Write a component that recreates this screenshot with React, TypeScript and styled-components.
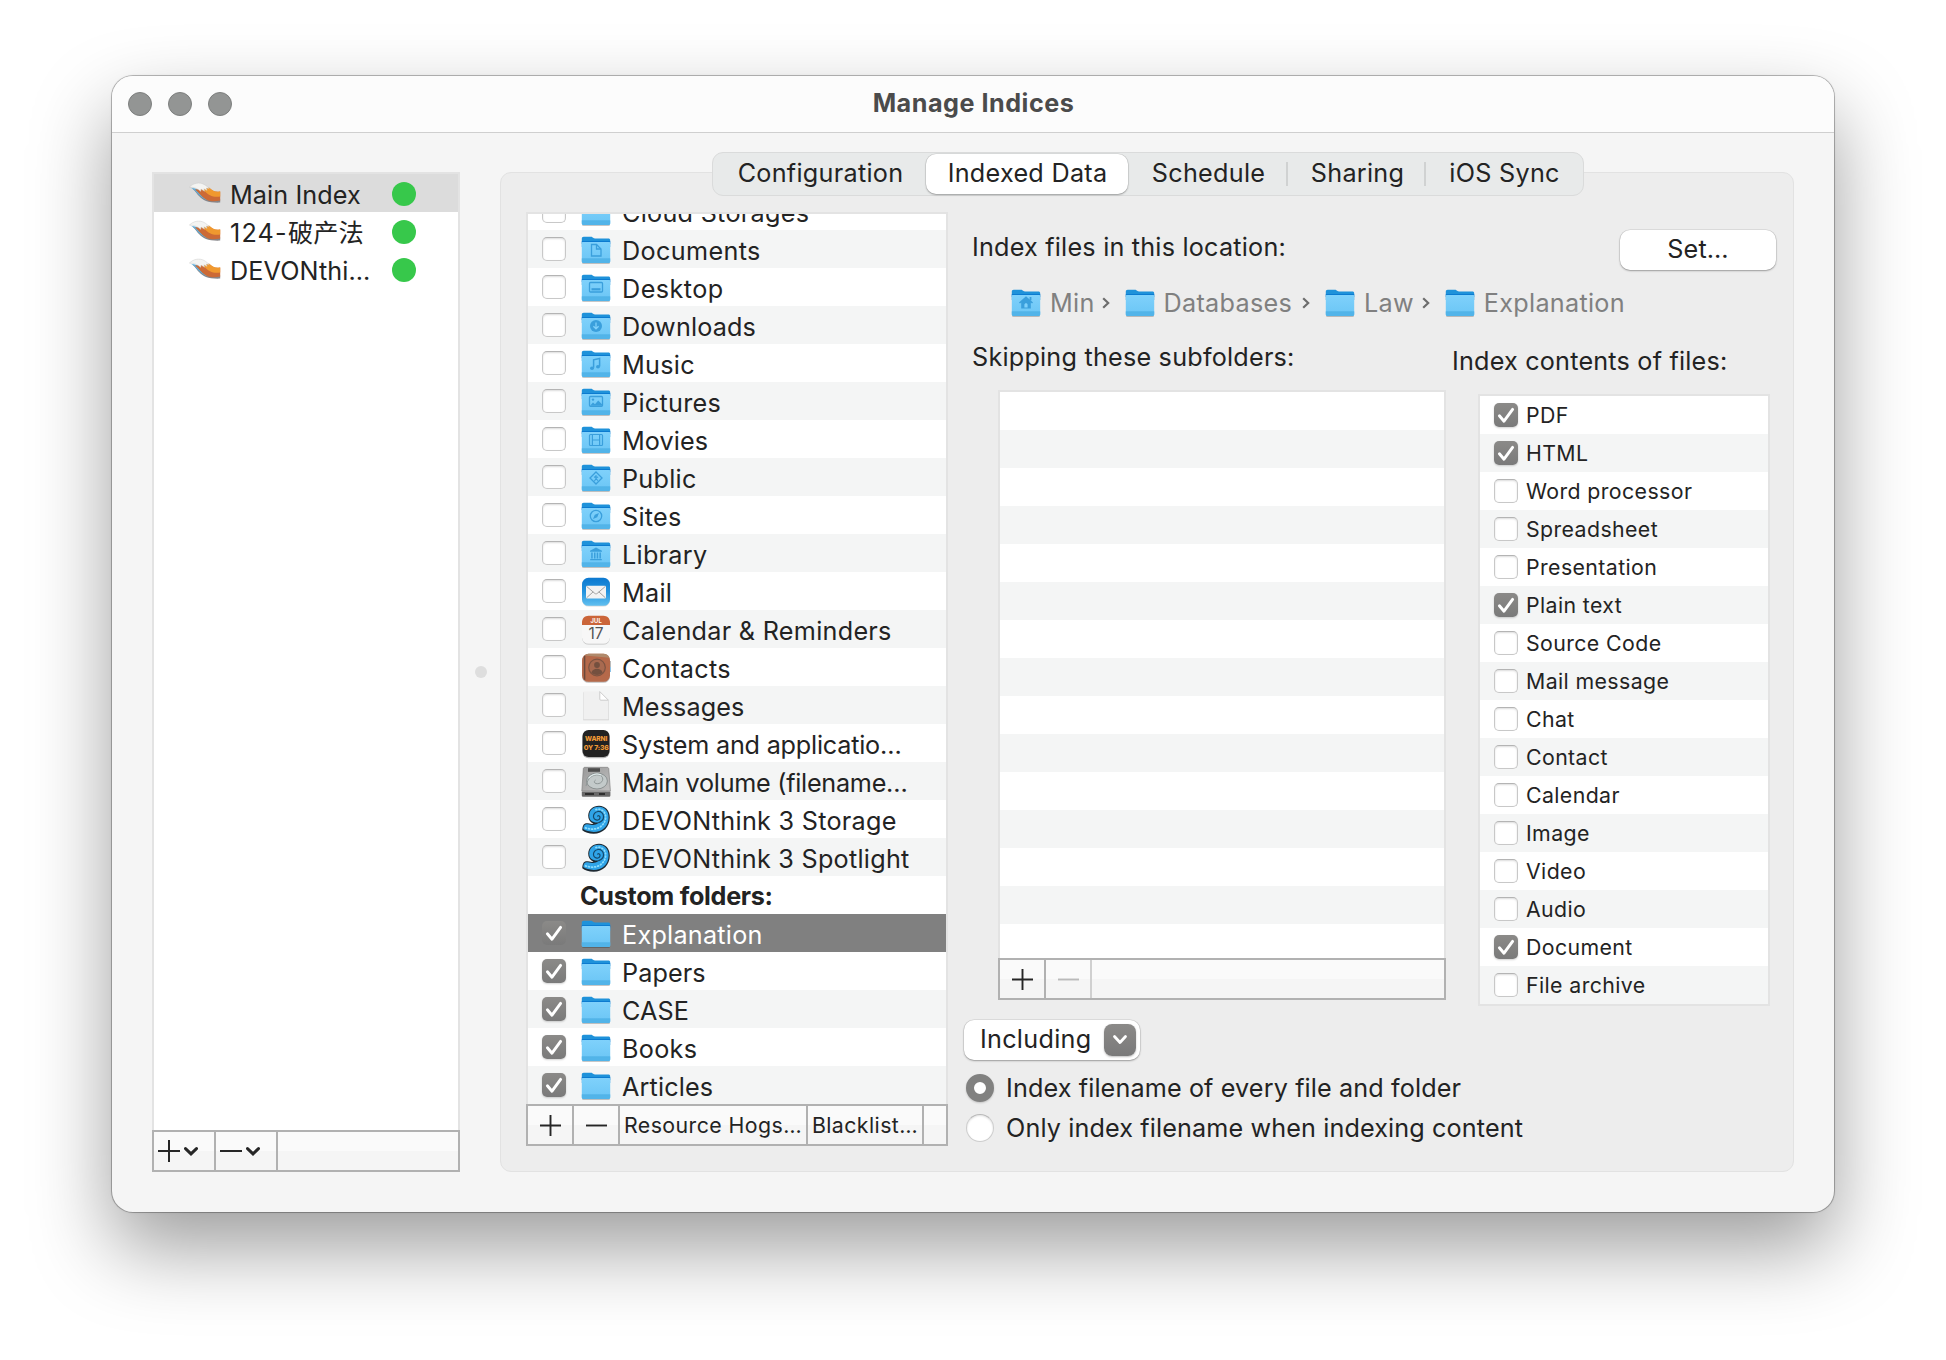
import React from "react";
import styled, { createGlobalStyle, css } from "styled-components";

const GlobalStyle = createGlobalStyle`
  * { box-sizing: border-box; }
  body {
    margin: 0;
    background: #fff;
    color: #232323;
    font-family: "Inter", "Noto Sans CJK SC", sans-serif;
    font-size: 25.2px;
    line-height: 34px;
    letter-spacing: 0.28px;
    -webkit-font-smoothing: antialiased;
  }
`;

/* ---------- window ---------- */

const Desktop = styled.div`
  width: 1946px;
  height: 1360px;
  padding: 76px 112px 148px;
  overflow: hidden;
`;

const Window = styled.main`
  display: flex;
  flex-direction: column;
  height: 1136px;
  border-radius: 21px;
  background: #f5f5f5;
  box-shadow: 0 0 0 1px rgba(0, 0, 0, 0.24), 0 0 3px rgba(0, 0, 0, 0.12), 0 36px 80px rgba(0, 0, 0, 0.39);
`;

const TitleBar = styled.header`
  display: grid;
  flex: none;
  grid-template-columns: 200px 1fr 200px;
  align-items: center;
  height: 57px;
  padding: 0 16px;
  border-bottom: 1px solid #cfcfcf;
  border-radius: 21px 21px 0 0;
  background: #fcfcfc;
`;

const Lights = styled.div`
  display: flex;
  gap: 16px;
`;

const Light = styled.span`
  width: 24px;
  height: 24px;
  border: 1px solid #7d7f7e;
  border-radius: 50%;
  background: #939594;
`;

const Title = styled.h1`
  margin: 0;
  padding: 0 0 3px 1px;
  color: #4b4b4b;
  font-size: inherit;
  font-weight: 700;
  letter-spacing: 0.5px;
  text-align: center;
`;

const Body = styled.div`
  display: flex;
  flex: 1;
  min-height: 0;
  padding: 19px 40px 40px;
`;

/* ---------- shared list pieces ---------- */

const ListFrame = styled.div`
  flex: 1;
  min-height: 0;
  overflow: hidden;
  border: 2px solid #e3e3e3;
  border-bottom-width: 0;
  background: #fff;
`;

const Footer = styled.div`
  display: flex;
  flex: none;
  height: 42px;
  border: 2px solid #b1b1b1;
  background: linear-gradient(#fafafa 0 50%, #f5f5f5 50% 100%);
`;

const FooterCell = styled.div<{ $w: number; $dim?: boolean }>`
  display: flex;
  align-items: center;
  justify-content: center;
  width: ${(p) => p.$w + 2}px;
  border-right: 2px solid ${(p) => (p.$dim ? "#d0d0d0" : "#b1b1b1")};
  font-size: 21.3px;
  letter-spacing: 0.44px;
  white-space: nowrap;
`;

const RowText = styled.span<{ $ls?: number }>`
  padding-top: 3px;
  white-space: nowrap;
  ${(p) => p.$ls !== undefined && css`letter-spacing: ${p.$ls}px;`}
`;

const IconSlot = styled.span`
  display: flex;
  width: 30px;
  height: 30px;
  margin-top: 2px;
  svg { display: block; overflow: visible; }
`;

const CheckBox = styled.span<{ $on?: boolean; $flat?: boolean }>`
  display: flex;
  align-items: center;
  justify-content: center;
  flex: none;
  width: 24px;
  height: 24px;
  border-radius: 5px;
  ${(p) =>
    p.$on
      ? css`
          background: linear-gradient(#8b8a88, #7a7a7a);
          box-shadow: ${p.$flat ? "none" : "0 1px 2px rgba(0, 0, 0, 0.18)"};
        `
      : css`
          border: 1px solid #c8c8c8;
          border-top-color: #b4b4b4;
          background: #fff;
          box-shadow: inset 0 1px 2px rgba(0, 0, 0, 0.14);
        `}
`;

/* ---------- sidebar ---------- */

const Sidebar = styled.aside`
  display: flex;
  flex-direction: column;
  width: 308px;
  margin-top: 20px;
`;

const IndexRow = styled.div<{ $active?: boolean }>`
  display: flex;
  align-items: center;
  height: 38px;
  padding-left: 35px;
  background: ${(p) => (p.$active ? "#dcdcdc" : "#fff")};
`;

const IndexName = styled(RowText)`
  width: 164px;
  padding-left: 9px;
  letter-spacing: 0.1px;
`;

const Digits = styled.span`
  letter-spacing: 1.2px;
`;

const StatusDot = styled.span`
  width: 24px;
  height: 24px;
  margin: 2px 0 0 7px;
  border-radius: 50%;
  background: #37c84b;
`;

const Splitter = styled.div`
  display: flex;
  align-items: center;
  justify-content: center;
  width: 40px;
  margin-top: 20px;
`;

const Grip = styled.span`
  width: 12px;
  height: 12px;
  margin-left: 2px;
  border-radius: 50%;
  background: #dedede;
`;

/* ---------- tabs and panel ---------- */

const Content = styled.section`
  display: flex;
  flex-direction: column;
  flex: 1;
`;

const Tabs = styled.nav`
  position: relative;
  z-index: 1;
  display: flex;
  flex: none;
  align-self: center;
  height: 44px;
  margin-left: 2px;
  padding: 1px;
  border: 1px solid #dadbdb;
  border-radius: 11px;
  background: #e8eaea;
`;

const Tab = styled.div<{ $w: number; $active?: boolean; $divider?: boolean }>`
  display: flex;
  align-items: center;
  justify-content: center;
  width: ${(p) => p.$w}px;
  padding: 0 0 3px 1px;
  border-radius: ${(p) => (p.$active ? "10px" : "0")};
  ${(p) =>
    p.$active &&
    css`
      background: #fff;
      box-shadow: 0 0 0 0.5px rgba(0, 0, 0, 0.12), 0 1px 2px rgba(0, 0, 0, 0.28);
    `}
  ${(p) =>
    p.$divider &&
    css`
      background: linear-gradient(#d0d2d2, #d0d2d2) right center / 2px 24px no-repeat;
    `}
`;

const Panel = styled.div`
  display: flex;
  flex: 1;
  min-height: 0;
  margin-top: -24px;
  padding: 39px 23px 25px 25px;
  border: 1px solid #e2e2e2;
  border-radius: 11px;
  background: #ededed;
`;

const SourceColumn = styled.div`
  display: flex;
  flex-direction: column;
  width: 422px;
`;

const SourceRow = styled.div<{ $tint?: boolean; $selected?: boolean }>`
  display: flex;
  align-items: center;
  height: 38px;
  padding-left: 14px;
  background: ${(p) => (p.$selected ? "#808080" : p.$tint ? "#f4f5f5" : "#fff")};
  color: ${(p) => (p.$selected ? "#fff" : "inherit")};
  &:first-child { margin-top: -22px; }
  ${IconSlot} { margin-left: 15px; margin-right: 11px; }
`;

const GroupHeading = styled.div`
  height: 38px;
  padding: 3px 0 0 52px;
  font-weight: 700;
  letter-spacing: -0.3px;
`;

const Details = styled.div`
  display: flex;
  flex-direction: column;
  flex: 1;
  padding: 18px 0 0 16px;
`;

const LocationRow = styled.div`
  display: flex;
  flex: none;
  justify-content: space-between;
  height: 40px;
  padding-left: 8px;
  letter-spacing: 0.21px;
`;

const buttonFace = css`
  flex: none;
  height: 40px;
  border-radius: 10px;
  background: #fff;
  box-shadow: 0 0 0 0.5px rgba(0, 0, 0, 0.13), 0 1px 2px rgba(0, 0, 0, 0.3);
`;

const PushButton = styled.div`
  ${buttonFace}
  display: flex;
  align-items: center;
  justify-content: center;
  width: 156px;
  margin-right: -6px;
  padding-bottom: 3px;
`;

const Crumbs = styled.div`
  display: flex;
  flex: none;
  align-items: center;
  height: 34px;
  margin-top: 16px;
  padding-left: 47px;
  color: #808080;
`;

const Crumb = styled.span`
  display: flex;
  align-items: center;
  ${IconSlot} { margin: 0 9px 0 0; }
`;

const CrumbArrow = styled.svg<{ $lead: number }>`
  display: block;
  margin: 0 14px 0 ${(p) => p.$lead}px;
`;

const Columns = styled.div`
  display: flex;
  flex: none;
  align-items: flex-start;
  height: 686px;
`;

const SkipColumn = styled.div`
  display: flex;
  flex-direction: column;
  width: 482px;
  height: 680px;
  padding-top: 20px;
  letter-spacing: 0.22px;
`;

const SkipBox = styled.div`
  display: flex;
  flex-direction: column;
  flex: 1;
  min-height: 0;
  width: 448px;
  margin: 16px 0 0 34px;
`;

const EmptyRow = styled.div`
  height: 38px;
  &:nth-child(even) { background: #f4f5f5; }
`;

const Caption = styled.div<{ $inset: number }>`
  padding-left: ${(p) => p.$inset}px;
`;

const TypeColumn = styled.div`
  padding: 24px 0 0 4px;
  letter-spacing: 0.2px;
`;

const TypeList = styled.div`
  width: 292px;
  margin: 16px 0 0 28px;
  border: 2px solid #e3e3e3;
  background: #fff;
`;

const TypeRow = styled.div`
  display: flex;
  align-items: center;
  gap: 8px;
  height: 38px;
  padding-left: 14px;
  font-size: 21.3px;
  letter-spacing: 0.4px;
  &:nth-child(even) { background: #f4f5f5; }
`;

const Popup = styled.div`
  ${buttonFace}
  display: flex;
  align-items: center;
  justify-content: space-between;
  width: 176px;
  margin-top: 14px;
  padding: 0 4px 0 16px;
`;

const PopupText = styled.span`
  padding-bottom: 3px;
`;

const PopupArrow = styled.span`
  display: flex;
  align-items: center;
  justify-content: center;
  width: 32px;
  height: 32px;
  border-radius: 8px;
  background: linear-gradient(#8b8a88, #7a7a7a);
  box-shadow: 0 1px 2px rgba(0, 0, 0, 0.25);
`;

const Radios = styled.div`
  flex: none;
  margin-top: 8px;
  letter-spacing: 0.12px;
`;

const RadioRow = styled.div`
  display: flex;
  align-items: center;
  gap: 12px;
  height: 40px;
  padding-left: 2px;
`;

const Radio = styled.span<{ $on?: boolean }>`
  width: 28px;
  height: 28px;
  border-radius: 50%;
  ${(p) =>
    p.$on
      ? css`
          border: 8px solid #818180;
          background: #fff;
          box-shadow: 0 1px 2px rgba(0, 0, 0, 0.18);
        `
      : css`
          border: 1px solid #cdcdcd;
          border-top-color: #b8b8b8;
          background: #fff;
          box-shadow: inset 0 1px 2px rgba(0, 0, 0, 0.12);
        `}
`;

/* ---------- icons ---------- */

const Tick = () => (
  <svg width="24" height="24" viewBox="0 0 24 24" fill="none">
    <path d="M5.4 12.8 10 18.2 18.6 6.4" stroke="#fff" strokeWidth="2.9" strokeLinecap="round" strokeLinejoin="round" />
  </svg>
);

const Plus = ({ size = 21 }: { size?: number }) => (
  <svg width={size} height={size} viewBox="0 0 22 22">
    <path d="M11 0v22M0 11h22" stroke="#262626" strokeWidth="2" />
  </svg>
);

const Minus = ({ dim, size = 21 }: { dim?: boolean; size?: number }) => (
  <svg width={size} height={size} viewBox="0 0 22 22">
    <path d="M0 11h22" stroke={dim ? "#bababa" : "#262626"} strokeWidth="2" />
  </svg>
);

const MenuArrow = styled(({ className }: { className?: string }) => (
  <svg className={className} width="14" height="9" viewBox="0 0 14 9" fill="none">
    <path d="M1.5 1.6 7 6.9l5.5-5.3" stroke="#262626" strokeWidth="3" strokeLinecap="round" />
  </svg>
))`
  margin: 1px 12px 0 4px;
`;

const glyphStroke = { fill: "none", stroke: "#3a9fdc", strokeWidth: 1.3 } as const;
const glyphFill = "#3a9fdc";

const glyphs: Record<string, React.ReactNode> = {
  documents: (
    <g {...glyphStroke}>
      <path d="M10.5 9.5h5l4.5 4.5v7h-9.5z" />
      <path d="M15.5 9.5v4.5h4.5" />
    </g>
  ),
  desktop: (
    <g>
      <rect x="8.5" y="9.5" width="13" height="9.5" rx="1" {...glyphStroke} />
      <rect x="10.5" y="15.2" width="9" height="2.2" fill={glyphFill} />
    </g>
  ),
  downloads: (
    <g>
      <circle cx="15" cy="15" r="6" fill={glyphFill} />
      <path d="M15 11.6v6M12.4 15.2l2.6 2.6 2.6-2.6" fill="none" stroke="#7fd0fa" strokeWidth="1.3" />
    </g>
  ),
  music: (
    <g>
      <path d="M12.6 18.8v-8l6-1.3v8" {...glyphStroke} strokeWidth="1.5" />
      <ellipse cx="11" cy="19.2" rx="2" ry="1.7" fill={glyphFill} />
      <ellipse cx="17" cy="17.8" rx="2" ry="1.7" fill={glyphFill} />
    </g>
  ),
  pictures: (
    <g>
      <rect x="8.5" y="9.5" width="13" height="9.8" rx="1" {...glyphStroke} />
      <circle cx="12" cy="12.6" r="1.2" fill={glyphFill} />
      <path d="m9 18.8 3-3.2 2 1.6 3.2-3.8 4 4.2v1.2z" fill={glyphFill} />
    </g>
  ),
  movies: (
    <g {...glyphStroke} strokeWidth="1.2">
      <rect x="8.5" y="9.5" width="13" height="11" rx="1" />
      <path d="M11.4 9.5v11M18.6 9.5v11M11.4 15h7.2" />
    </g>
  ),
  public: (
    <g {...glyphStroke}>
      <path d="m15 9 6 6-6 6-6-6z" />
      <path d="M15 12v3.4l-1.6 2.8M15 15.2l1.8 2.6M12.9 14.2l2.1-.8 2.2 1" strokeWidth="1.1" />
    </g>
  ),
  sites: (
    <g>
      <circle cx="15" cy="15" r="5.7" {...glyphStroke} />
      <path d="m18 12-1.8 4.2L12 18l1.8-4.2z" fill={glyphFill} />
    </g>
  ),
  library: (
    <g fill={glyphFill}>
      <path d="m15 8.6 6 3.2v1H9v-1z" />
      <path d="M10.2 13.6h1.5v6h-1.5zM13 13.6h1.5v6H13zM15.7 13.6h1.5v6h-1.5zM18.4 13.6h1.5v6h-1.5zM9.2 20h11.6v1.3H9.2z" />
    </g>
  ),
  home: (
    <g fill={glyphFill}>
      <path d="m15 8.2 7 6.4-1 1-1.2-1v6h-9.6v-6l-1.2 1-1-1z" />
      <path d="M18.600 9h1.800v3.400h-1.800z" />
      <path d="M13.400 19.600v-2.800c0-.9.700-1.500 1.600-1.500s1.600.6 1.600 1.500v2.800z" fill="#7fd0fa" />
    </g>
  ),
};

const Folder = ({ glyph }: { glyph?: string }) => (
  <svg width="30" height="30" viewBox="0 0 30 30">
    <defs>
      <linearGradient id="folderFront" x1="0" y1="0" x2="0" y2="1">
        <stop offset="0" stopColor="#7fd1fb" />
        <stop offset="1" stopColor="#6ac5f5" />
      </linearGradient>
    </defs>
    <rect x="1" y="26" width="28" height="3" rx="1.5" fill="rgba(0,0,0,.22)" />
    <path d="M.8 3.6C.8 2.4 1.5 1.7 2.7 1.7h7.1c1.2 0 1.6.5 2.3 1.1.6.5 1.1.8 2 .8h13.1c1.3 0 2 .6 2 1.8V12H.8z" fill="#1f92da" />
    <path d="M.8 6h28.4v3H.8z" fill="#0c7bd0" />
    <path d="M.8 8.2c0-.9.5-1.2 1.2-1.2h26c.8 0 1.2.4 1.2 1.2v18c0 1-.5 1.7-1.6 1.7H2.4c-1 0-1.6-.6-1.6-1.7z" fill="url(#folderFront)" />
    <path d="M.8 24h28.4v2.3c0 1-.5 1.7-1.6 1.7H2.4c-1 0-1.6-.6-1.6-1.7z" fill="#52b4e9" />
    <path d="M.8 23.6h28.4" stroke="#4fb0e6" strokeWidth=".7" />
    {glyph && glyphs[glyph]}
  </svg>
);

const MailIcon = () => (
  <svg width="30" height="30" viewBox="0 0 30 30">
    <defs>
      <linearGradient id="mailBg" x1="0" y1="0" x2="0" y2="1">
        <stop offset="0" stopColor="#0c79d0" />
        <stop offset=".5" stopColor="#2493de" />
        <stop offset="1" stopColor="#62c0f0" />
      </linearGradient>
    </defs>
    <rect x="1" y="1.6" width="28" height="28" rx="6.5" fill="rgba(0,0,0,.15)" />
    <rect x="1" y=".8" width="28" height="28" rx="6.5" fill="url(#mailBg)" />
    <rect x="5" y="8.8" width="20" height="12.6" rx="1.2" fill="#f3f3f3" />
    <path d="m5.6 9.4 8.2 7c.8.6 1.600.6 2.400 0l8.200-7M5.600 20.800l6.600-6M24.400 20.800l-6.600-6" fill="none" stroke="#a2a2a2" strokeWidth="1" />
  </svg>
);

const CalendarIcon = () => (
  <svg width="30" height="30" viewBox="0 0 30 30">
    <rect x="1" y="1.6" width="28" height="28" rx="6.5" fill="rgba(0,0,0,.22)" />
    <rect x="1" y=".8" width="28" height="28" rx="6.5" fill="#f7f7f7" />
    <path d="M1 10V7.300C1 3.600 3.800.8 7.500.8h15C26.200.8 29 3.600 29 7.300V10z" fill="#cb6539" />
    <text x="15.200" y="7.800" textAnchor="middle" fontSize="5.800" fontWeight="700" fill="#fff" letterSpacing=".2">JUL</text>
    <text x="15" y="23.600" textAnchor="middle" fontSize="15.500" fill="#555" letterSpacing="0">17</text>
  </svg>
);

const ContactsIcon = () => (
  <svg width="30" height="30" viewBox="0 0 30 30">
    <rect x="1" y="1.800" width="28" height="28" rx="6.500" fill="rgba(0,0,0,.25)" />
    <path d="M26 8h3.600v6H26z" fill="#8c8c8c" />
    <path d="M26 14h3.600v5H26z" fill="#3f9bd8" />
    <rect x="1" y=".8" width="28" height="28" rx="6.500" fill="#b5694a" />
    <path d="M4 2.600C5 1.500 6.200.8 7.500.8h15c2.700 0 5 1.600 6 4z" fill="#b08a6c" />
    <path d="M3.600 2.800v24" stroke="#6b4a3c" strokeWidth="1.500" />
    <circle cx="16" cy="14.500" r="8.300" fill="#a86a50" stroke="#7d5442" strokeWidth="1.200" />
    <circle cx="16" cy="12" r="2.900" fill="#74503f" />
    <path d="M10.300 19.800c1-3 3.200-4 5.700-4s4.700 1 5.700 4c-1.600 1.500-3.500 2.200-5.700 2.200s-4.100-.7-5.700-2.200z" fill="#74503f" />
  </svg>
);

const PageIcon = () => (
  <svg width="30" height="30" viewBox="0 0 30 30">
    <path d="M2.300 1.200h16.600l8.900 8.600v19.500H2.300z" fill="#cdcdcd" />
    <path d="M2.500.6h16.300l8.600 8.600v19.400H2.500z" fill="#f0f0f0" />
    <path d="M18.800.6v7.600c0 .7.300 1 1 1h7.600z" fill="#fff" stroke="#c6c6c6" strokeWidth=".9" />
  </svg>
);

const ConsoleIcon = () => (
  <svg width="30" height="30" viewBox="0 0 30 30">
    <rect x="1.500" y="2.200" width="27" height="27" rx="6" fill="rgba(0,0,0,.3)" />
    <rect x="1.500" y="1" width="27" height="27" rx="6" fill="#222" />
    <text x="15.200" y="12" textAnchor="middle" fontSize="6.600" fontWeight="800" fill="#f19a35" letterSpacing="-.1">WARNI</text>
    <text x="15.200" y="21.200" textAnchor="middle" fontSize="6.800" fontWeight="800" fill="#f19a35" letterSpacing="-.2">0Y 7:36</text>
  </svg>
);

const DriveIcon = () => (
  <svg width="30" height="30" viewBox="0 0 30 30">
    <defs>
      <linearGradient id="driveTop" x1="0" y1="0" x2="1" y2="1">
        <stop offset="0" stopColor="#989898" />
        <stop offset="1" stopColor="#c0c0c0" />
      </linearGradient>
    </defs>
    <path d="M4 .3h22c1 0 1.600.5 1.800 1.500L29.400 24H.8L2.300 1.800C2.400.8 3 .3 4 .3z" fill="url(#driveTop)" stroke="#777" strokeWidth=".6" />
    <path d="M.8 24.400h28.600v3.800c0 1-.6 1.500-1.500 1.500H2.400c-1 0-1.600-.5-1.600-1.500z" fill="#686868" />
    <path d="M7 1.200h12v3.600H7z" fill="#4d4d4d" />
    <ellipse cx="16" cy="14" rx="10.400" ry="8" fill="#c3caca" stroke="#858b8b" strokeWidth=".9" />
    <path d="M5 19c1.500-8 7-12 13-11 5 1 5 7 0 8.500-4 1-6-1.500-3.500-3.500" fill="none" stroke="#8f9797" strokeWidth="1" />
    <path d="M8 11c3-4 8-5 12-3" fill="none" stroke="#e3eeee" strokeWidth="1.100" />
    <path d="M4 27h9M18 27h6" stroke="#2d2d2d" strokeWidth="2" />
  </svg>
);

const ShellIcon = () => (
  <svg width="30" height="30" viewBox="0 0 30 30" fill="none" strokeLinecap="round">
    <path d="M1.300 25.200c0-3.600 1.200-6.800 3.700-7 2.800-.1 4.700 1 7.500.6-3.800-1.800-5.400-4.600-5.300-8.200C7.400 4.600 12 .8 18 .8c6.400 0 10.800 5 10.800 11.800 0 9.600-6.800 16.200-16.200 16.200-4.800 0-8.600-1.400-11.300-3.600z" fill="#1e2a33" />
    <path d="M8.200 10.500C8.400 5 12.500 1.800 17.900 1.800c5.700 0 9.700 4.400 9.700 10.600 0 8.700-6.200 14.500-15 14.500-4.200 0-7.800-1-10.300-2.800.1-2.700 1-4.800 3-4.900 2.600 0 4.700 1.100 7.800.5 2-.4 3.800-1.200 5.100-2.300-5.900.9-10.200-1.900-10-6.900z" fill="#2fa4e8" />
    <path d="M17.800 17.600c3.300-1.200 4.900-3.700 4.700-6.400-.2-3-2.700-5-5.500-4.700-3 .4-4.900 2.900-4.500 5.500.4 2.300 2.600 3.600 4.500 3 1.700-.5 2.500-2.300 1.700-3.600-.5-.8-1.500-.9-2-.3" stroke="#15496b" strokeWidth="1.200" />
    <path d="M4.600 22.800c6 2.300 12 1.600 16-2 4-3.800 5.300-9.200 2.800-13.300-2-3-5.600-3.900-8.600-2.900" stroke="#8bdcfc" strokeWidth="1.800" strokeDasharray=".8 2.300" />
  </svg>
);

const TailIcon = () => (
  <svg width="32" height="24" viewBox="0 0 32 24">
    <path d="M.6 6.500C5 7.500 6.500 11.500 10 15c4 4.500 9.500 7 21.200 6.600v-3z" fill="#858589" />
    <path d="M2 6.800c3 1.200 5 4.600 8.300 7.400 2.700 2.400 4.900 4 8.200 5.200L14 9z" fill="#5ab2e4" />
    <path d="M6 8.400c4 3 6 7.200 10.500 9.800 4 2.300 9 2.600 14.700 1.300v-8.900c-5.500.9-8.200-1-11.200-3.800z" fill="#cc6a36" />
    <path d="M11 8c4 .6 6 4.200 10 6.200 3 1.600 6.700 1.800 10.200 1.200v-4.800c-5.500.7-8.200-1.300-10.800-3.900z" fill="#f0992f" />
    <path d="M.4 6C4.500 2 10.500 1 15 3.400c2.300 1.300 3.800 2.700 5.300 4.200l-3-.5.8 2.300-3.200-1.600.6 2.500-3.500-2.200-.3 2.300C8.600 7.400 5 6.300.4 6z" fill="#f4f4f2" stroke="#c2c2c2" strokeWidth=".4" />
  </svg>
);

/* ---------- data ---------- */

type Source = { name: string; icon: React.ReactNode; on?: boolean; selected?: boolean; ls?: number };

const library: Source[] = [
  { name: "Cloud Storages", icon: <Folder /> },
  { name: "Documents", icon: <Folder glyph="documents" />, ls: 0.35 },
  { name: "Desktop", icon: <Folder glyph="desktop" />, ls: 0.45 },
  { name: "Downloads", icon: <Folder glyph="downloads" />, ls: 0.15 },
  { name: "Music", icon: <Folder glyph="music" /> },
  { name: "Pictures", icon: <Folder glyph="pictures" />, ls: 0.3 },
  { name: "Movies", icon: <Folder glyph="movies" />, ls: 0.1 },
  { name: "Public", icon: <Folder glyph="public" /> },
  { name: "Sites", icon: <Folder glyph="sites" /> },
  { name: "Library", icon: <Folder glyph="library" /> },
  { name: "Mail", icon: <MailIcon /> },
  { name: "Calendar & Reminders", icon: <CalendarIcon /> },
  { name: "Contacts", icon: <ContactsIcon /> },
  { name: "Messages", icon: <PageIcon />, ls: 0.1 },
  { name: "System and applicatio…", icon: <ConsoleIcon />, ls: -0.21 },
  { name: "Main volume (filename…", icon: <DriveIcon />, ls: -0.27 },
  { name: "DEVONthink 3 Storage", icon: <ShellIcon />, ls: 0.28 },
  { name: "DEVONthink 3 Spotlight", icon: <ShellIcon />, ls: 0.26 },
];

const custom: Source[] = [
  { name: "Explanation", icon: <Folder />, on: true, selected: true, ls: 0.25 },
  { name: "Papers", icon: <Folder />, on: true, ls: 0.1 },
  { name: "CASE", icon: <Folder />, on: true, ls: 0.1 },
  { name: "Books", icon: <Folder />, on: true },
  { name: "Articles", icon: <Folder />, on: true, ls: 0.15 },
];

const types: [string, boolean][] = [
  ["PDF", true],
  ["HTML", true],
  ["Word processor", false],
  ["Spreadsheet", false],
  ["Presentation", false],
  ["Plain text", true],
  ["Source Code", false],
  ["Mail message", false],
  ["Chat", false],
  ["Contact", false],
  ["Calendar", false],
  ["Image", false],
  ["Video", false],
  ["Audio", false],
  ["Document", true],
  ["File archive", false],
];

const path: { name: string; glyph?: string; lead: number }[] = [
  { name: "Min", glyph: "home", lead: 0 },
  { name: "Databases", lead: 6 },
  { name: "Law", lead: 9 },
  { name: "Explanation", lead: 7 },
];

const SourceItem = ({ item, tint }: { item: Source; tint: boolean }) => (
  <SourceRow $tint={tint} $selected={item.selected}>
    <CheckBox $on={item.on} $flat={item.selected}>{item.on && <Tick />}</CheckBox>
    <IconSlot>{item.icon}</IconSlot>
    <RowText $ls={item.ls}>{item.name}</RowText>
  </SourceRow>
);

export default function App() {
  return (
    <Desktop>
      <GlobalStyle />
      <Window>
        <TitleBar>
          <Lights>
            <Light />
            <Light />
            <Light />
          </Lights>
          <Title>Manage Indices</Title>
        </TitleBar>
        <Body>
          <Sidebar>
            <ListFrame>
              <IndexRow $active>
                <TailIcon />
                <IndexName>Main Index</IndexName>
                <StatusDot />
              </IndexRow>
              <IndexRow>
                <TailIcon />
                <IndexName><Digits>124-</Digits>破产法</IndexName>
                <StatusDot />
              </IndexRow>
              <IndexRow>
                <TailIcon />
                <IndexName>DEVONthi…</IndexName>
                <StatusDot />
              </IndexRow>
            </ListFrame>
            <Footer>
              <FooterCell $w={60}><Plus size={22} /><MenuArrow /></FooterCell>
              <FooterCell $w={60}><Minus size={22} /><MenuArrow /></FooterCell>
            </Footer>
          </Sidebar>
          <Splitter><Grip /></Splitter>
          <Content>
            <Tabs>
              <Tab $w={212}>Configuration</Tab>
              <Tab $w={202} $active>Indexed Data</Tab>
              <Tab $w={160} $divider>Schedule</Tab>
              <Tab $w={138} $divider>Sharing</Tab>
              <Tab $w={156}>iOS Sync</Tab>
            </Tabs>
            <Panel>
              <SourceColumn>
                <ListFrame>
                  {library.map((item, i) => (
                    <SourceItem key={item.name} item={item} tint={i % 2 === 1} />
                  ))}
                  <GroupHeading>Custom folders:</GroupHeading>
                  {custom.map((item, i) => (
                    <SourceItem key={item.name} item={item} tint={i % 2 === 0} />
                  ))}
                </ListFrame>
                <Footer>
                  <FooterCell $w={44}><Plus /></FooterCell>
                  <FooterCell $w={44}><Minus /></FooterCell>
                  <FooterCell $w={186}>Resource Hogs…</FooterCell>
                  <FooterCell $w={114}>Blacklist…</FooterCell>
                </Footer>
              </SourceColumn>
              <Details>
                <LocationRow>
                  <span>Index files in this location:</span>
                  <PushButton>Set…</PushButton>
                </LocationRow>
                <Crumbs>
                  {path.map(({ name, glyph, lead }, i) => (
                    <Crumb key={name}>
                      {i > 0 && (
                        <CrumbArrow $lead={lead} width="10" height="12" viewBox="0 0 10 12" fill="none">
                          <path d="m2.200 1.200 5 4.800-5 4.800" stroke="#6d6d6d" strokeWidth="2.200" />
                        </CrumbArrow>
                      )}
                      <IconSlot><Folder glyph={glyph} /></IconSlot>
                      {name}
                    </Crumb>
                  ))}
                </Crumbs>
                <Columns>
                  <SkipColumn>
                    <Caption $inset={8}>Skipping these subfolders:</Caption>
                    <SkipBox>
                      <ListFrame>
                        {Array.from({ length: 15 }, (_, i) => <EmptyRow key={i} />)}
                      </ListFrame>
                      <Footer>
                        <FooterCell $w={44}><Plus /></FooterCell>
                        <FooterCell $w={44} $dim><Minus dim /></FooterCell>
                      </Footer>
                    </SkipBox>
                  </SkipColumn>
                  <TypeColumn>
                    <Caption $inset={2}>Index contents of files:</Caption>
                    <TypeList>
                      {types.map(([name, on]) => (
                        <TypeRow key={name}>
                          <CheckBox $on={on}>{on && <Tick />}</CheckBox>
                          {name}
                        </TypeRow>
                      ))}
                    </TypeList>
                  </TypeColumn>
                </Columns>
                <Popup>
                  <PopupText>Including</PopupText>
                  <PopupArrow>
                    <svg width="16" height="12" viewBox="0 0 16 12" fill="none">
                      <path d="m2.500 2.500 5.500 6 5.500-6" stroke="#fff" strokeWidth="2.800" strokeLinecap="round" strokeLinejoin="round" />
                    </svg>
                  </PopupArrow>
                </Popup>
                <Radios>
                  <RadioRow><Radio $on />Index filename of every file and folder</RadioRow>
                  <RadioRow><Radio />Only index filename when indexing content</RadioRow>
                </Radios>
              </Details>
            </Panel>
          </Content>
        </Body>
      </Window>
    </Desktop>
  );
}
